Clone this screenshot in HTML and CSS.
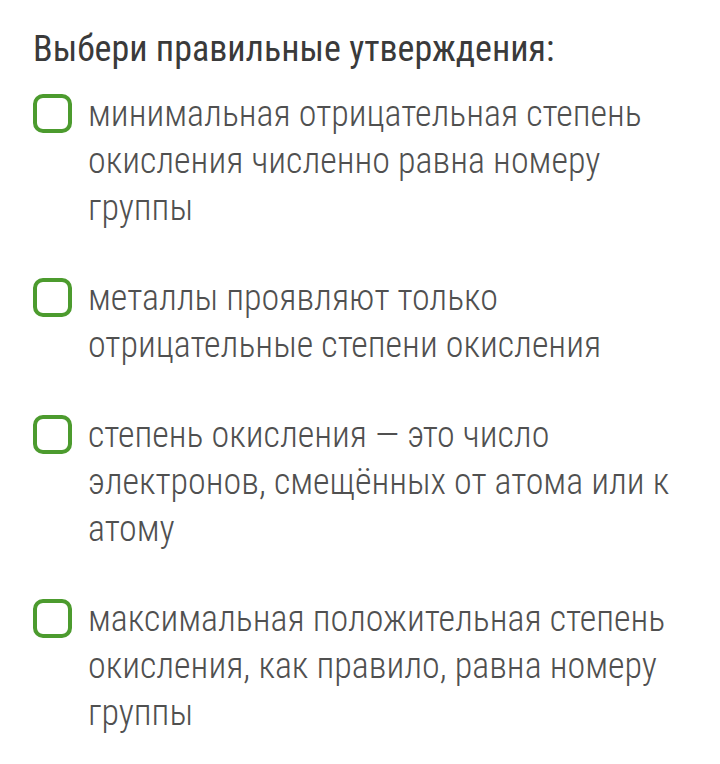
FILE: index.html
```html
<!DOCTYPE html>
<html lang="ru">
<head>
<meta charset="utf-8">
<link rel="stylesheet" href="styles.css">
</head>
<body>
<div class="quiz">
  <h1 class="title">Выбери правильные утверждения:</h1>
  <ul class="options">
    <li class="option"><span class="box"></span><span class="text">минимальная отрицательная степень окисления численно равна номеру группы</span></li>
    <li class="option"><span class="box"></span><span class="text">металлы проявляют только отрицательные степени окисления</span></li>
    <li class="option"><span class="box"></span><span class="text">степень окисления — это число электронов, смещённых от атома или к атому</span></li>
    <li class="option"><span class="box"></span><span class="text">максимальная положительная степень окисления, как правило, равна номеру группы</span></li>
  </ul>
</div>
</body>
</html>
```
FILE: styles.css
```css
html, body {
  margin: 0;
  padding: 0;
  background: #ffffff;
}
.quiz {
  padding: 24px 30px 0 33px;
  font-family: Roboto, "Noto Sans", sans-serif;
  font-stretch: condensed;
}
.title {
  margin: 0 0 13px 0;
  font-size: 36px;
  font-weight: 400;
  line-height: 50px;
  color: #3a3a3a;
}
.options {
  list-style: none;
  margin: 0;
  padding: 0;
  display: flex;
  flex-direction: column;
  gap: 39px;
}
.option {
  display: flex;
  align-items: flex-start;
  gap: 16px;
}
.box {
  flex: 0 0 auto;
  width: 31px;
  height: 31px;
  margin-top: 7px;
  border: 4.5px solid #4c9b2e;
  border-radius: 10px;
}
.text {
  font-size: 36px;
  font-weight: 300;
  line-height: 47px;
  color: #505050;
  margin-top: 4px;
}
```
